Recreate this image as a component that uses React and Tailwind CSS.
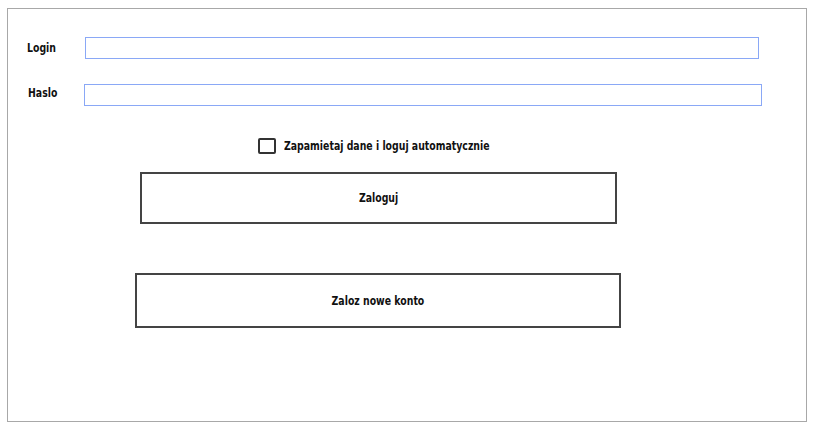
export default function App() {
  const font = { fontFamily: '"DejaVu Sans Condensed", "DejaVu Sans", sans-serif' };
  return (
    <div className="w-[814px] h-[431px] bg-white pt-[8px] pl-[7px]" style={font}>
      <div className="w-[800px] h-[414px] border border-[#a8a8a8] text-[13px] font-bold text-[#111]">
        {/* Login row */}
        <div className="flex items-center h-[22px] mt-[28px]">
          <span className="ml-[19px] w-[58px] scale-x-[0.8] origin-left">Login</span>
          <div className="w-[674px] h-[22px] border border-[#8aa8f6]" />
        </div>

        {/* Haslo row */}
        <div className="flex items-center h-[22px] mt-[25px]">
          <span className="ml-[20px] w-[56px] scale-x-[0.8] origin-left -translate-y-[2px]">Haslo</span>
          <div className="w-[678px] h-[22px] border border-[#8aa8f6]" />
        </div>

        {/* Remember me */}
        <div className="flex items-center h-[16px] mt-[32px] ml-[250px]">
          <div className="w-[18px] h-[16px] border-2 border-[#333] rounded-[2px]" />
          <span className="ml-[8px] scale-x-[0.8] origin-left whitespace-nowrap">
            Zapamietaj dane i loguj automatycznie
          </span>
        </div>

        {/* Zaloguj */}
        <button className="mt-[18px] ml-[132px] w-[477px] h-[52px] border-2 border-[#444] bg-white flex items-center justify-center font-bold">
          <span className="scale-x-[0.8]">Zaloguj</span>
        </button>

        {/* Zaloz nowe konto */}
        <button className="mt-[49px] ml-[127px] w-[486px] h-[55px] border-2 border-[#444] bg-white flex items-center justify-center font-bold">
          <span className="scale-x-[0.8]">Zaloz nowe konto</span>
        </button>
      </div>
    </div>
  );
}
